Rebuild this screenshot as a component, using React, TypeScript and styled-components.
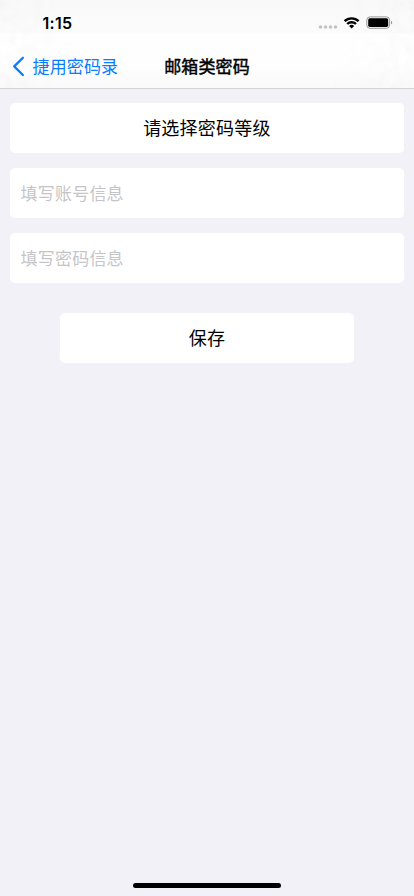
import React from 'react';
import styled, { createGlobalStyle } from 'styled-components';

const GlobalStyle = createGlobalStyle`
  * { box-sizing: border-box; }
  html, body { margin: 0; padding: 0; background: #f2f1f7; }
  button, input { font: inherit; border: 0; margin: 0; outline: none; }
`;

const Screen = styled.div`
  width: 414px;
  height: 896px;
  display: flex;
  flex-direction: column;
  background: #f2f1f7;
  color: #000;
  font-family: Inter, 'Noto Sans CJK SC', sans-serif;
  overflow: hidden;
`;

const Header = styled.header`
  position: relative;
  height: 89px;
  flex: none;
  border-bottom: 1px solid #d3d3d6;
  background: linear-gradient(#f9f9f9 0, #fbfbfb 32px, #fefefe 34px, #fefefe 64px, #fafafa 88px);
`;

const Texture = styled.svg`
  position: absolute;
  inset: 0;
  width: 414px;
  height: 88px;
`;

const StatusBar = styled.div`
  position: relative;
  height: 44px;
  display: flex;
  align-items: center;
  justify-content: space-between;
  padding: 2px 21px 0 42.5px;
`;

const Clock = styled.span`
  font-size: 16px;
  font-weight: 600;
  line-height: 20px;
  letter-spacing: 0.3px;
`;

const Indicators = styled.div`
  display: flex;
  align-items: center;
`;

const NavBar = styled.nav`
  position: relative;
  height: 44px;
  display: grid;
  grid-template-columns: 1fr auto 1fr;
  align-items: center;
  font-size: 17px;
  letter-spacing: 0.15px;
`;

const BackButton = styled.button`
  display: flex;
  align-items: center;
  gap: 7.5px;
  padding: 0 0 0 12px;
  background: transparent;
  color: #0a7cff;
  letter-spacing: inherit;
  line-height: 24px;
  white-space: nowrap;
`;

const BackLabel = styled.span`
  padding-top: 2px;
`;

const Title = styled.h1`
  margin: 0;
  padding-top: 2px;
  font-size: 17px;
  font-weight: 400;
  line-height: 24px;
  -webkit-text-stroke: 0.45px #000;
`;

const Form = styled.main`
  flex: 1;
  display: flex;
  flex-direction: column;
  gap: 15px;
  padding: 14px 10px 0;
`;

const ActionButton = styled.button<{ $inset?: boolean }>`
  height: 50px;
  margin: ${({ $inset }) => ($inset ? '15px 50px 0' : '0')};
  padding: 0 0 2px;
  border-radius: 5px;
  background: #fff;
  color: #000;
  font-size: 18px;
  letter-spacing: 0.25px;
`;

const Field = styled.input`
  height: 50px;
  width: 100%;
  padding: 2px 10px 0 10.6px;
  border-radius: 5px;
  background: #fff;
  font-size: 17px;
  letter-spacing: 0.2px;
  &::placeholder { color: #c5c5c7; opacity: 1; }
`;

const HomeArea = styled.footer`
  height: 34px;
  display: flex;
  justify-content: center;
  padding-top: 20.5px;
`;

const HomeIndicator = styled.div`
  width: 148px;
  height: 5px;
  border-radius: 3px;
  background: #000;
`;

const PaperTexture = () => (
  <Texture viewBox="0 0 414 88" aria-hidden="true">
    <defs>
      <filter id="grain" x="0" y="0" width="100%" height="100%">
        <feTurbulence type="fractalNoise" baseFrequency="0.09" numOctaves="2" seed="4" />
        <feColorMatrix values="0 0 0 0 0.45  0 0 0 0 0.45  0 0 0 0 0.45  0.14 0 0 0 -0.05" />
      </filter>
      <linearGradient id="sides">
        <stop offset="0" stopColor="#fff" />
        <stop offset="0.18" stopColor="#000" />
        <stop offset="0.8" stopColor="#000" />
        <stop offset="1" stopColor="#fff" />
      </linearGradient>
      <mask id="fade">
        <rect width="414" height="88" fill="url(#sides)" />
      </mask>
    </defs>
    <g mask="url(#fade)">
      <rect width="414" height="88" filter="url(#grain)" />
    </g>
  </Texture>
);

const StatusIcons = () => (
  <svg width="75" height="16" viewBox="318 15 75 16" aria-hidden="true">
    <g fill="#c3c3c3">
      <circle cx="320.5" cy="27" r="1.8" />
      <circle cx="325.5" cy="27" r="1.8" />
      <circle cx="330.5" cy="27" r="1.8" />
      <circle cx="335.5" cy="27" r="1.8" />
    </g>
    <g fill="none" stroke="#000" strokeWidth="2.4">
      <path d="M344.6 21.2a10 10 0 0 1 14 0" />
      <path d="M347.2 24a6.3 6.3 0 0 1 8.8 0" />
    </g>
    <path d="M351.6 28.5l-2.5-2.5a3.6 3.6 0 0 1 5 0z" />
    <rect x="366.8" y="16.9" width="22.8" height="11.4" rx="3.2" fill="none" stroke="#999" />
    <rect x="368.2" y="18.3" width="20" height="8.6" rx="1.7" />
    <path d="M391 20.7c1.7.6 1.7 3.2 0 3.8z" fill="#999" />
  </svg>
);

export default function App() {
  return (
    <>
      <GlobalStyle />
      <Screen lang="zh-CN">
        <Header>
          <PaperTexture />
          <StatusBar>
            <Clock>1:15</Clock>
            <Indicators>
              <StatusIcons />
            </Indicators>
          </StatusBar>
          <NavBar>
            <BackButton type="button">
              <svg width="13" height="21" viewBox="0 0 13 21" aria-hidden="true">
                <path d="M10.9 1.7L2.2 10.4l8.7 8.6" fill="none" stroke="currentColor" strokeWidth="2.3" strokeLinecap="round" strokeLinejoin="round" />
              </svg>
              <BackLabel>捷用密码录</BackLabel>
            </BackButton>
            <Title>邮箱类密码</Title>
          </NavBar>
        </Header>
        <Form>
          <ActionButton type="button">请选择密码等级</ActionButton>
          <Field placeholder="填写账号信息" />
          <Field placeholder="填写密码信息" />
          <ActionButton type="button" $inset>保存</ActionButton>
        </Form>
        <HomeArea>
          <HomeIndicator />
        </HomeArea>
      </Screen>
    </>
  );
}
